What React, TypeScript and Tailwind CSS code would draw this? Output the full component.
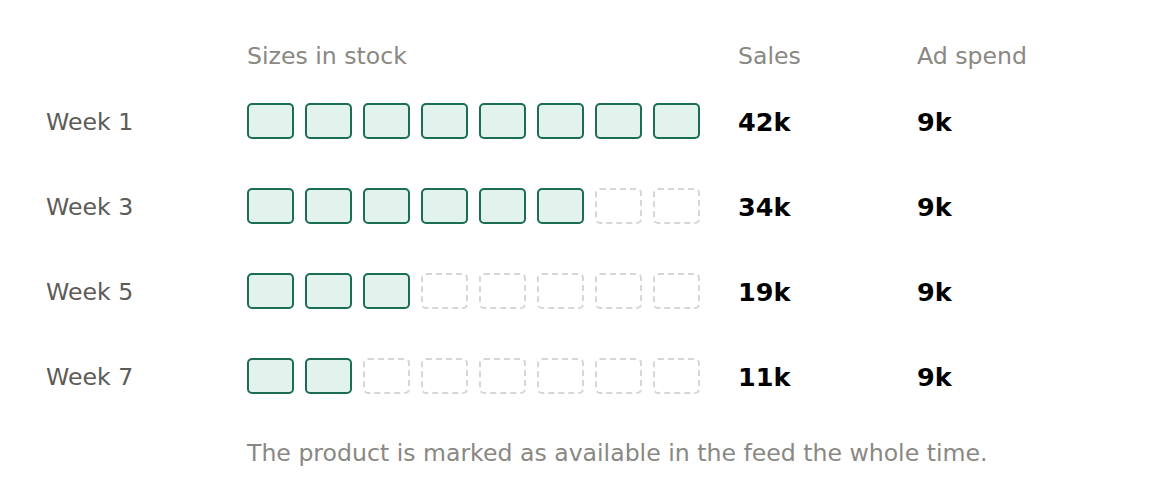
import React from "react";

const rows = [
  { week: "Week 1", sizes: 8, sales: "42k", ad: "9k" },
  { week: "Week 3", sizes: 6, sales: "34k", ad: "9k" },
  { week: "Week 5", sizes: 3, sales: "19k", ad: "9k" },
  { week: "Week 7", sizes: 2, sales: "11k", ad: "9k" },
];

function SizeBox({ filled }: { filled: boolean }) {
  return filled ? (
    <div className="w-[47px] h-[36px] rounded-[5px] border-2 border-[#1b6e50] bg-[#e1f3ec]" />
  ) : (
    <div className="w-[47px] h-[36px] rounded-[5px] border-2 border-dashed border-[#d6d6d3]" />
  );
}

export default function App() {
  return (
    <div
      className="w-[1164px] h-[494px] bg-white pl-[46px] pt-[42px]"
      style={{ fontFamily: '"DejaVu Sans", sans-serif' }}
    >
      <div className="flex h-[30px] items-center text-[23.6px] text-[#8a8883]">
        <div className="w-[201px]" />
        <div className="w-[491px]">Sizes in stock</div>
        <div className="w-[179px]">Sales</div>
        <div>Ad spend</div>
      </div>

      <div className="mt-[31px] flex flex-col gap-[49px]">
        {rows.map((r) => (
          <div key={r.week} className="flex h-[36px] items-center">
            <div className="w-[201px] pt-[4px] text-[23.6px] text-[#5c5b57]">{r.week}</div>
            <div className="w-[491px] flex gap-[11px]">
              {Array.from({ length: 8 }).map((_, i) => (
                <SizeBox key={i} filled={i < r.sizes} />
              ))}
            </div>
            <div className="w-[179px] pt-[2px] text-[25.5px] font-bold text-black">{r.sales}</div>
            <div className="pt-[2px] text-[25.5px] font-bold text-black">{r.ad}</div>
          </div>
        ))}
      </div>

      <div className="mt-[45px] flex h-[30px] items-center text-[23.6px] text-[#8a8883]">
        <div className="w-[201px]" />
        <div>The product is marked as available in the feed the whole time.</div>
      </div>
    </div>
  );
}
